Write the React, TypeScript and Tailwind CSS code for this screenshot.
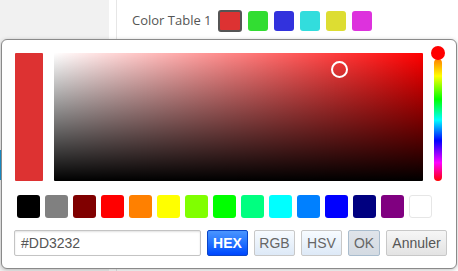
import React from 'react';

const tableColors = ['#dd3232', '#32dd32', '#3232dd', '#32dddd', '#dddd32', '#dd32dd'];

const palette = [
  '#000000',
  '#808080',
  '#800000',
  '#ff0000',
  '#ff8000',
  '#ffff00',
  '#80ff00',
  '#00ff00',
  '#00ff80',
  '#00ffff',
  '#0080ff',
  '#0000ff',
  '#000080',
  '#800080',
  '#ffffff',
];

function ModeButton({ label, width, active, pressed }: { label: string; width: string; active?: boolean; pressed?: boolean }) {
  let cls = 'border-[#c8c8c8] bg-gradient-to-b from-[#f7fbff] to-[#dde9f7] text-[#666]';
  if (active) cls = 'border-[#0a45c8] bg-gradient-to-b from-[#4a95ff] to-[#0044ff] font-bold text-white';
  if (pressed) cls = 'border-[#a9bccd] bg-gradient-to-b from-[#dfe4ea] to-[#d3dae2] text-[#666]';
  return (
    <button className={`h-[26px] shrink-0 rounded-[2px] border text-[14px] ${width} ${cls}`}>
      {label}
    </button>
  );
}

export default function App() {
  return (
    <div className="relative h-[271px] w-[458px] overflow-hidden bg-white font-['Liberation_Sans',Arial,sans-serif]">
      {/* page behind the picker */}
      <div className="flex h-full">
        <div className="w-[109px] bg-[#f1f1f1]">
          <div className="mt-[150px] h-[30px] w-[3px] bg-[#1a96d4]" />
        </div>
        <div className="ml-[7px] w-px bg-[#e6e6e6]" />
        <div className="flex h-[42px] flex-1 items-center gap-[6px] pl-[15px]">
          <span className="font-['Open_Sans',sans-serif] text-[13px] text-[#555]">Color Table 1</span>
          {tableColors.map((c, i) => (
            <span
              key={c}
              className={
                i === 0
                  ? 'h-[22px] w-[24px] rounded-[3px] border-2 border-[#555]'
                  : 'h-[20px] w-[20px] rounded-[3px]'
              }
              style={{ backgroundColor: c }}
            />
          ))}
        </div>
      </div>

      {/* colour picker popup */}
      <div className="absolute left-[1px] top-[39px] h-[230px] w-[456px] rounded-[6px] border border-[#8a8a8a] bg-white shadow-[0_1px_4px_rgba(0,0,0,0.25)]">
        <div className="flex pl-[13px] pt-[13px]">
          <div className="h-[128px] w-[28px] shrink-0 rounded-[1px] bg-[#dd3232]" />
          <div
            className="relative ml-[11px] h-[128px] w-[369px] shrink-0 rounded-[1px]"
            style={{
              background:
                'linear-gradient(to top, #000, rgba(0,0,0,0)), linear-gradient(to right, #fff, rgba(255,255,255,0)), #ff0000',
            }}
          >
            <span className="absolute left-[277px] top-[8px] h-[17px] w-[17px] rounded-full border-2 border-white" />
          </div>
          <div className="relative ml-[8px] flex w-[14px] shrink-0 justify-center">
            <div
              className="mt-[6px] h-[122px] w-[8px] rounded-full"
              style={{
                background:
                  'linear-gradient(to bottom, #ff8000, #ffff00 14%, #00ff00 33%, #00ffff 50%, #0000ff 67%, #ff00ff 85%, #ff0000)',
              }}
            />
            <span className="absolute left-0 top-[-7px] h-[14px] w-[14px] rounded-full bg-[#ff0000]" />
          </div>
        </div>

        <div className="mt-[14px] flex gap-[5px] pl-[15px]">
          {palette.map((c) => (
            <span
              key={c}
              className={c === '#ffffff' ? 'h-[23px] w-[23px] shrink-0 rounded-[3px] border border-[#e6e6e6]' : 'h-[23px] w-[23px] shrink-0 rounded-[3px]'}
              style={{ backgroundColor: c }}
            />
          ))}
        </div>

        <div className="mt-[12px] flex items-center gap-[6px] pl-[12px]">
          <div className="flex h-[26px] w-[187px] shrink-0 items-center rounded-[2px] border border-[#c4c4c4] pl-[6px] text-[14px] text-[#555] shadow-[inset_0_1px_2px_rgba(0,0,0,0.12)]">
            #DD3232
          </div>
          <ModeButton label="HEX" width="w-[41px]" active />
          <ModeButton label="RGB" width="w-[41px]" />
          <ModeButton label="HSV" width="w-[41px]" />
          <ModeButton label="OK" width="w-[32px]" pressed />
          <button className="h-[26px] w-[61px] shrink-0 rounded-[2px] border border-[#c8c8c8] bg-gradient-to-b from-[#f6f6f6] to-[#e3e3e3] text-[14px] text-[#555]">
            Annuler
          </button>
        </div>
      </div>
    </div>
  );
}
